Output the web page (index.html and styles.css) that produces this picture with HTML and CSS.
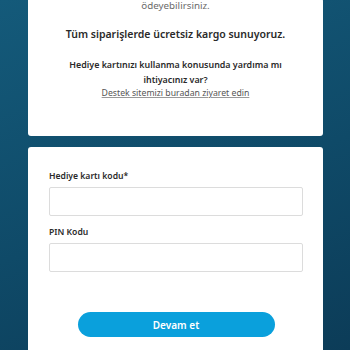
FILE: index.html
```html
<!DOCTYPE html>
<html lang="tr">
<head>
<meta charset="utf-8">
<link rel="stylesheet" href="styles.css">
</head>
<body>
<div class="page">
  <section class="card info">
    <p class="muted">ödeyebilirsiniz.</p>
    <p class="strong">Tüm siparişlerde ücretsiz kargo sunuyoruz.</p>
    <p class="help">Hediye kartınızı kullanma konusunda yardıma mı ihtiyacınız var?</p>
    <a class="link" href="#">Destek sitemizi buradan ziyaret edin</a>
  </section>
  <section class="card form">
    <label class="label">Hediye kartı kodu*</label>
    <div class="input"></div>
    <label class="label">PIN Kodu</label>
    <div class="input"></div>
    <button class="btn">Devam et</button>
  </section>
</div>
</body>
</html>
```
FILE: styles.css
```css
html, body { margin: 0; padding: 0; }
body {
  width: 350px;
  height: 350px;
  overflow: hidden;
  background: linear-gradient(160deg, #145a7a 0%, #0f4a68 55%, #0c3c58 100%);
  font-family: "Noto Sans", "DejaVu Sans", sans-serif;
}
.page {
  display: flex;
  flex-direction: column;
  gap: 11px;
  padding: 0 27px 0 28px;
  margin-top: -2px;
}
.card {
  background: #fff;
  border-radius: 3px;
}
.info {
  display: flex;
  flex-direction: column;
  align-items: center;
  text-align: center;
  padding: 0 20px 40px;
  height: 98px;
}
.info p { margin: 0; }
.muted {
  color: #6a6a6a;
  font-size: 9.8px;
  line-height: 16px;
}
.strong {
  margin-top: 13px !important;
  color: #2a2a2a;
  font-size: 10.5px;
  font-weight: 600;
  line-height: 14px;
}
.help {
  margin-top: 16px !important;
  color: #2a2a2a;
  font-size: 8.9px;
  font-weight: 600;
  line-height: 15px;
  width: 240px;
}
.link {
  color: #555;
  font-size: 8.7px;
  line-height: 13px;
  text-decoration: underline;
  text-decoration-color: #999;
}
.form {
  display: flex;
  flex-direction: column;
  padding: 23px 20px 40px 21px;
  min-height: 230px;
}
.label {
  color: #2a2a2a;
  font-size: 8.6px;
  font-weight: 600;
  line-height: 12px;
}
.input {
  margin-top: 5px;
  height: 27px;
  border: 1px solid #dcdcdc;
  border-radius: 2px;
  margin-bottom: 10px;
}
.btn {
  align-self: center;
  margin-top: 30px;
  width: 197px;
  height: 25px;
  border: none;
  border-radius: 13px;
  background: #0aa0dc;
  color: #fff;
  font-family: inherit;
  font-size: 10px;
  font-weight: 600;
}
```
